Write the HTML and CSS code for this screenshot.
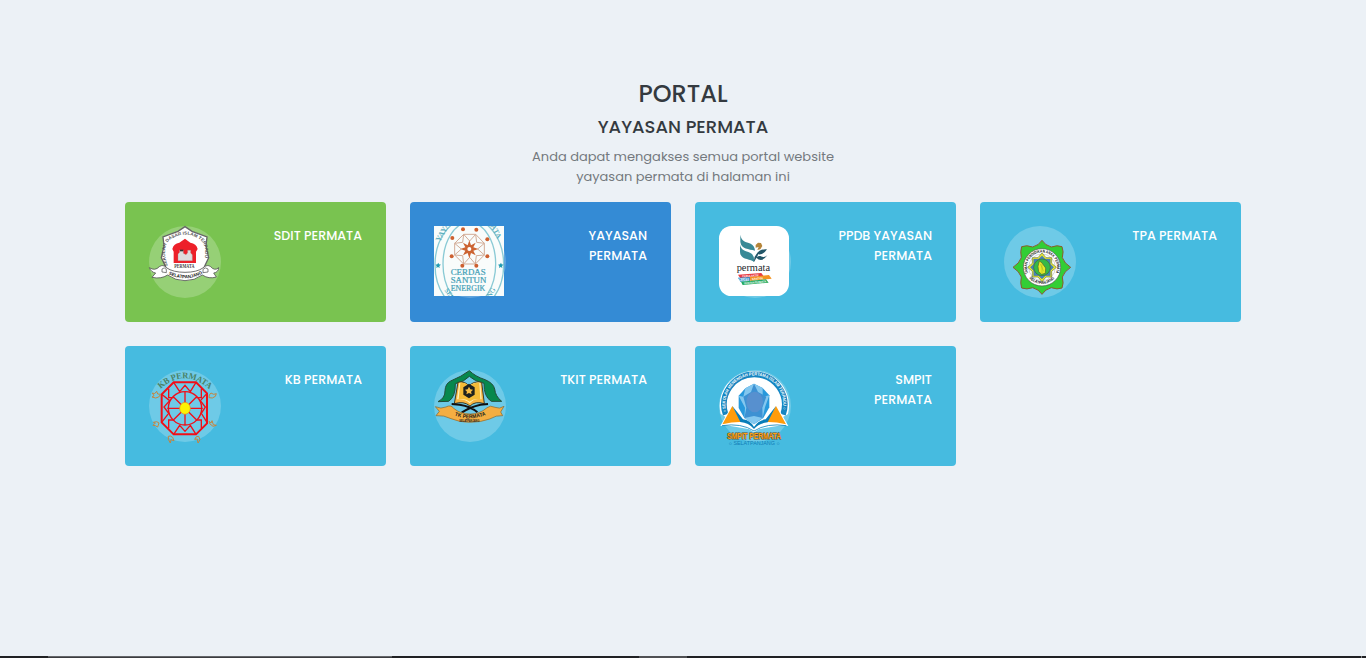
FILE: index.html
```html
<!DOCTYPE html>
<html lang="id">
<head>
<meta charset="utf-8">
<title>Portal Yayasan Permata</title>
<link rel="stylesheet" href="styles.css">
</head>
<body>
<main class="page">
  <header class="intro">
    <h1 class="intro-title">PORTAL</h1>
    <h2 class="intro-sub">YAYASAN PERMATA</h2>
    <p class="intro-text">Anda dapat mengakses semua portal website<br>yayasan permata di halaman ini</p>
  </header>
  <section class="cards">
    <a class="card green">
      <span class="logo"><svg viewBox="27 24 216 216">
        <path d="M135 26L156 40L201 57L198 84L206 119L190 153L135 181L80 153L64 119L72 84L69 57L114 40Z" fill="#fff" stroke="#666" stroke-width="4"/>
        <path id="sd" d="M84 146Q58 72 106 57Q136 42 165 57Q212 72 187 147" fill="none"/>
        <text font-size="13" fill="#555" class="bold"><textPath href="#sd" startOffset="2" textLength="240" lengthAdjust="spacingAndGlyphs">SEKOLAH DASAR ISLAM TERPADU</textPath></text>
        <path d="M101 135V101L97 93Q101 76 118 74L135 62L151 74Q169 76 173 93L168 101V135Z" fill="#ed2029"/>
        <path d="M114 128V108L119 103V97H130V106L138 110L143 104V97H152V105L157 110V128Z" fill="#ddd" stroke="#a88" stroke-width="1"/><path d="M120 95h10v5h-10z" fill="#333"/>
        <path d="M28 149Q45 160 58 146Q69 138 79 149Q99 163 135 163Q171 163 190 149Q202 138 212 146Q224 160 236 149Q235 163 221 165L229 177Q207 184 187 171Q164 188 135 188Q106 188 83 171Q63 184 36 178L47 165Q34 163 28 149Z" fill="#fff" stroke="#555" stroke-width="2.500"/>
        <path d="M66 162V153Q73 146 79 154V164ZM189 164V154Q196 146 204 153V162Z" fill="#fff" stroke="#444" stroke-width="2"/>
        <text x="103" y="151" font-size="17" textLength="60" lengthAdjust="spacingAndGlyphs" class="serif bold" fill="#444">PERMATA</text>
        <path id="sb" d="M84 168Q135 194 187 167" fill="none"/><text font-size="14" class="bold" fill="#222"><textPath href="#sb" startOffset="2" textLength="106" lengthAdjust="spacingAndGlyphs">SELATPANJANG</textPath></text>
      </svg></span>
      <h3 class="name">SDIT PERMATA</h3>
    </a>
    <a class="card blue">
      <span class="logo"><svg viewBox="27 24 216 216">
        <clipPath id="square"><path d="M27 24h210v210H27z"/></clipPath>
        <g clip-path="url(#square)"><path fill="#f9fcfb" d="M27 24h210v210H27z"/>
        <g fill="none" stroke="#8acad5" stroke-width="4"><ellipse cx="133" cy="140" rx="103" ry="139"/><ellipse cx="133" cy="138" rx="79" ry="125"/></g>
        <text x="44" y="73" transform="rotate(-60 44 73)" font-size="24" class="serif bold" fill="#5eb0c0">YAYA</text><text x="196" y="24" transform="rotate(62 196 24)" font-size="23" class="serif bold" fill="#5eb0c0">ATA</text>
        <g fill="none" stroke="#d3ad97" stroke-width="3"><path d="M116 49L152 49L178 76V111L151 138H116L89 111V76ZM116 49L134 69L152 49L155 73L178 76L158 93L178 111L154 113L151 138L134 118L116 138L113 113L89 111L109 93L89 76L113 73Z"/></g>
        <path d="M133 67L138 82L152 74L145 88L160 93L145 98L152 112L138 105L133 121L128 105L114 112L121 98L106 93L121 88L114 74L128 82Z" fill="#cc6432"/><circle cx="133" cy="93" r="6" fill="#fff"/>
        <g fill="#cd6030"><circle cx="114" cy="34" r="6"/><circle cx="154" cy="35" r="6"/><circle cx="82" cy="60" r="6"/><circle cx="187" cy="64" r="6"/><circle cx="80" cy="115" r="6"/><circle cx="187" cy="115" r="6"/><circle cx="112" cy="143" r="6"/><circle cx="154" cy="143" r="6"/></g>
        <g class="serif" font-size="22" fill="#46a2b7" stroke="#46a2b7" stroke-width=".6"><text x="77" y="170" textLength="105" lengthAdjust="spacingAndGlyphs">CERDAS</text><text x="77" y="194" textLength="107" lengthAdjust="spacingAndGlyphs">SANTUN</text><text x="77" y="218" textLength="104" lengthAdjust="spacingAndGlyphs">ENERGIK</text></g>
        <g fill="#209bb2"><path id="st" d="M40 134l2 5 6 1-5 4 1 6-5-3-5 3 1-6-4-4 6-1z"/><use href="#st" x="188"/></g>
        <text x="58" y="217" transform="rotate(55 58 217)" class="serif" font-size="20" fill="#2795aa">SEL</text><text x="196" y="240" transform="rotate(-57 196 240)" class="serif" font-size="21" fill="#2795aa">NG</text></g>
      </svg></span>
      <h3 class="name">YAYASAN<br>PERMATA</h3>
    </a>
    <a class="card cyan">
      <span class="logo"><svg viewBox="27 24 216 216">
        <rect x="27" y="24" width="210" height="210" rx="37" fill="#fff"/>
        <path d="M91 50C95 73 107 70 122 77Q134 83 135 98C116 93 94 94 91 72ZM90 80C94 98 107 98 120 104Q134 110 132 132C123 121 91 128 90 101Z" fill="#388996"/>
        <path d="M132 132Q130 113 146 103L143 113ZM133 128Q141 112 151 114Q163 121 172 112Q155 136 139 119ZM139 109Q149 92 171 94Q161 111 145 109Z" fill="#225668"/>
        <path d="M137 81L144 74L153 75L157 84L151 94L142 96L146 87L137 89Z" fill="#b5853a"/>
        <text x="80" y="158" font-size="29" textLength="100" lengthAdjust="spacingAndGlyphs" class="serif" fill="#25272c">permata</text>
        <path d="M84 170L154 165L161 175L91 181Z" fill="#e83b43"/><path d="M84 179L120 177V189L91 191Z" fill="#2385c6"/><path d="M119 177L177 171L185 182L121 189Z" fill="#f39421"/><path d="M93 191L168 184L176 194L98 201Z" fill="#22aa60"/>
        <g fill="#fff" font-size="8" class="bold"><text x="97" y="178" transform="rotate(-4 97 178)">CERIA AKTIF</text><text x="87" y="188" textLength="30" lengthAdjust="spacingAndGlyphs">CERDAS</text><text x="126" y="186" transform="rotate(-5 126 186)">SANTUN</text><text x="101" y="199" transform="rotate(-5 101 199)" textLength="68" lengthAdjust="spacingAndGlyphs">YAYASAN PERMATA</text></g>
      </svg></span>
      <h3 class="name">PPDB YAYASAN<br>PERMATA</h3>
    </a>
    <a class="card cyan">
      <span class="logo"><svg viewBox="27 24 216 216">
        <path d="M141 67Q150 82 169 87Q187 80 201 86Q207 100 202 119Q208 136 227 148Q208 160 202 177Q207 196 201 210Q187 216 169 209Q150 214 141 229Q132 214 113 209Q95 216 80 210Q75 196 79 177Q73 160 54 148Q73 136 79 119Q75 100 80 86Q95 80 113 87Q132 82 141 67Z" fill="#32ce35" stroke="#8b5b2e" stroke-width="3"/>
        <circle cx="141" cy="148" r="56" fill="#fff" stroke="#555" stroke-width="2"/>
        <circle cx="141" cy="148" r="40" fill="#fff" stroke="#777"/>
        <path d="M141 105L153 119H170V136L184 148L170 160V177H153L141 191L129 177H112V160L98 148L112 136V119H129Z" fill="#f1ed31" stroke="#657b35" stroke-width="2"/>
        <path d="M141 113L151 123L166 123V138L176 148L166 158V173H151L141 183L131 173H116V158L106 148L116 138V123H131Z" fill="#4383bb" stroke="#567" stroke-width="1"/>
        <circle cx="141" cy="148" r="25" fill="#35b948" stroke="#49652f" stroke-width="2"/><path d="M133 129Q138 132 141 135L152 150L151 166L140 169L131 161L129 145Z" fill="#e6ec29" stroke="#586525" stroke-width="2"/><path d="M136 138l10 22M141 138v27" stroke="#849321"/>
        <path id="ta" d="M101 168A44.700 44.700 0 1 1 181 168" fill="none"/><path id="tb" d="M99 175A50 50 0 0 0 183 175" fill="none"/>
        <g font-size="12" class="bold" fill="#111"><text><textPath href="#ta" startOffset="2" textLength="176" lengthAdjust="spacingAndGlyphs">TAMAN PENDIDIKAN ANAK PERMATA</textPath></text><text><textPath href="#tb" startOffset="6" textLength="86" lengthAdjust="spacingAndGlyphs">SELATPANJANG</textPath></text></g>
      </svg></span>
      <h3 class="name">TPA PERMATA</h3>
    </a>
    <a class="card cyan">
      <span class="logo"><svg viewBox="27 24 216 216">
        <path id="kb" d="M60 82Q134 15 209 83" fill="none"/><text font-size="26" class="serif bold" fill="#498164"><textPath href="#kb" startOffset="2" textLength="164" lengthAdjust="spacingAndGlyphs">KB PERMATA</textPath></text>
        <g fill="none" stroke="#f10e18"><path d="M101 61H168L201 94V184L168 217H101L65 181V97Z" stroke-width="6"/><circle cx="135" cy="139" r="50" stroke-width="4"/><path d="M101 61L119 89L135 70L151 89L168 61M101 217L119 190L135 208L151 190L168 217M65 97L89 116L72 135L86 154L65 181M201 94L181 116L196 135L184 154L201 181M86 80V107H104M184 80V107H166M86 199V174H104M184 199V174H166M82 139H188M135 89V189M100 104L170 174M170 104L100 174" stroke-width="4"/></g>
        <ellipse cx="135" cy="139" rx="16" ry="18" fill="#fff200" stroke="#db8b29" stroke-width="2"/>
        <g fill="none" stroke="#c5843d" stroke-width="3"><path d="M56 105L47 108L36 105L42 101L37 93L44 95L50 88L53 96L62 97ZM208 99L213 93L221 97L229 95L226 103L217 108L207 107ZM40 181L46 183L39 190L46 191L53 195L57 183L50 179ZM207 178L213 183L216 176L220 188L229 190L219 193L209 185ZM85 223L85 232L91 243L93 233L102 236L98 226L91 222ZM169 224L164 232L172 231L174 243L180 233L176 223Z"/></g>
      </svg></span>
      <h3 class="name">KB PERMATA</h3>
    </a>
    <a class="card cyan">
      <span class="logo"><svg viewBox="27 24 216 216">
        <path d="M133 26Q109 44 77 57Q61 65 60 86Q61 108 39 119L71 118Q92 104 91 65Q117 60 133 43Q149 58 177 64Q176 104 199 118H230Q211 103 209 81Q205 63 180 53Q150 43 133 26Z" fill="#07884d" stroke="#224c38" stroke-width="3"/>
        <path d="M99 61Q120 56 132 72Q146 56 170 61L178 125Q151 116 135 132Q116 116 88 125Z" fill="#f8b441" stroke="#3d3c25" stroke-width="3"/><path d="M103 62Q123 61 132 74Q146 60 166 62L170 112Q148 108 134 124Q119 109 96 112Z" fill="#fff0b5"/>
        <path d="M106 62Q124 61 132 73Q143 61 163 62L166 112Q146 108 134 119Q122 108 101 112Z" fill="#f4bb38"/>
        <path d="M132 65L149 76V98L132 109L115 98V76Z" fill="#1d211e"/><path d="M132 74L136 82L144 83L138 89L140 97L132 93L124 97L126 89L120 83L128 82Z" fill="#f6bc44"/>
        <path d="M80 126L104 128Q138 133 157 151M189 126L166 128Q130 137 110 152" fill="none" stroke="#111" stroke-width="6"/>
        <path d="M31 134Q48 142 63 135Q77 127 86 139Q106 156 136 156Q164 156 185 138Q195 128 210 136Q224 142 237 133L227 150L233 161Q214 159 194 171Q167 181 135 181Q103 181 78 170Q57 159 33 161L43 148Z" fill="#f4ae42" stroke="#8a6327" stroke-width="2"/>
        <path id="tk" d="M87 160Q133 178 183 159" fill="none"/><text font-size="16" class="bold" fill="#172119"><textPath href="#tk" startOffset="2" textLength="96" lengthAdjust="spacingAndGlyphs">TK PERMATA</textPath></text><text x="103" y="180" font-size="8" class="bold" fill="#222" textLength="60" lengthAdjust="spacingAndGlyphs">SELATPANJANG</text>
      </svg></span>
      <h3 class="name">TKIT PERMATA</h3>
    </a>
    <a class="card cyan">
      <span class="logo"><svg viewBox="27 24 216 216">
        <path d="M32 156A104 104 0 1 1 234 156L219 165L224 188L132 204L40 188L47 165Z" fill="#fff"/><path d="M47 158A91 91 0 1 1 219 158" fill="none" stroke="#1685c1" stroke-width="17"/>
        <path id="sm" d="M50 153A87 87 0 1 1 216 153" fill="none"/><text font-size="13" class="bold" fill="#fff"><textPath href="#sm" startOffset="3" textLength="312" lengthAdjust="spacingAndGlyphs">○ SEKOLAH MENENGAH PERTAMA ISLAM TERPADU ○</textPath></text>
        <path d="M132 65L158 78L178 100V136L160 168L132 187L103 168L86 138V101L106 79Z" fill="#2799dc"/><path d="M132 65L106 79L100 104L86 101L105 137L103 168L132 187L158 167L165 136L178 100L158 104L158 78Z" fill="#83c7ef"/><path d="M132 65L123 90L100 104L109 137L103 168L132 162L158 168L157 137L169 104L144 90Z" fill="#3d91d3"/><ellipse cx="134" cy="120" rx="25" ry="31" fill="#5790cf"/>
        <path d="M67 127L31 192Q94 180 132 211Q173 180 235 192L198 127L170 172Q146 178 132 195Q120 178 95 173Z" fill="#fff"/>
        <path d="M67 132L94 180Q70 179 37 187ZM198 132L228 187Q196 179 170 180Z" fill="#ff9c0b"/><path d="M67 132L99 172Q121 175 132 195Q144 175 167 172L198 132L173 181Q146 184 132 201Q116 182 91 180Z" fill="#087db9"/>
        <path d="M36 191Q94 182 132 207Q171 182 229 191" fill="none" stroke="#0d85bd" stroke-width="2.500"/>
        <text x="52" y="231" font-size="27" textLength="161" lengthAdjust="spacingAndGlyphs" class="bold outlined">SMPIT PERMATA</text><text x="56" y="249" font-size="14" textLength="153" lengthAdjust="spacingAndGlyphs" fill="#117db7">○ SELATPANJANG ○</text>
      </svg></span>
      <h3 class="name">SMPIT<br>PERMATA</h3>
    </a>
  </section>
</main>
<footer class="edge"><i class="edge-start"></i><i class="edge-search"></i><i class="edge-gap"></i><i class="edge-active"></i><i class="edge-end"></i></footer>
</body>
</html>
```
FILE: styles.css
```css
* { box-sizing: border-box; }
body {
  margin: 0;
  height: 658px;
  display: flex;
  flex-direction: column;
  overflow: hidden;
  background: #ecf1f6;
  color: #343a40;
  font-family: Poppins, Inter, sans-serif;
}
.page { flex: 1; width: 1116px; margin: 0 auto; padding-top: 79px; }
.intro { height: 123px; text-align: center; }
.intro-title, .intro-sub, .intro-text, .name { margin: 0; font-weight: 500; }
.intro-title { font-size: 24px; line-height: 30px; }
.intro-sub { margin-top: 7px; font-size: 18px; line-height: 22px; }
.intro-text { margin-top: 9px; font-size: 13px; line-height: 20px; font-weight: 400; color: #74797e; }
.cards { display: grid; grid-template-columns: repeat(4, 261px); grid-auto-rows: 120px; gap: 24px; }
.card { display: flex; justify-content: space-between; padding: 24px; border-radius: 4px; color: #fff; }
.green { background: #79c350; }
.blue { background: #348bd5; }
.cyan { background: #46bbe0; }
.logo { width: 72px; height: 72px; border-radius: 50%; background: rgba(255, 255, 255, .22); }
.logo svg { display: block; width: 72px; height: 72px; overflow: visible; font-family: "Liberation Sans", sans-serif; }
.logo .serif { font-family: "Liberation Serif", serif; }
.logo .bold { font-weight: 700; }
.logo .outlined { fill: #ffa315; stroke: #604a2a; stroke-width: 3px; paint-order: stroke; }
.name { font-size: 12.640px; line-height: 20px; text-align: right; }
.edge { display: flex; height: 2px; background: #202124; }
.edge-start { width: 48px; }
.edge-search { width: 344px; background: #3b3d40; border-top: 1px solid #65676a; }
.edge-gap { width: 247px; }
.edge-active { width: 48px; background: #505154; }
.edge-end { width: 1px; margin-left: 674px; background: #85878a; }
```
